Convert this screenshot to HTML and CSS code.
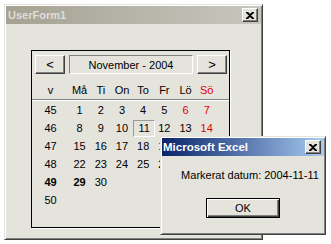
FILE: index.html
```html
<!DOCTYPE html>
<html lang="sv">
<head>
    <meta charset="UTF-8">
    <title>UserForm1</title>
    <link rel="stylesheet" href="styles.css">
</head>
<body>
    <div class="window">
        <div class="caption inactive">
            <span class="caption-text">UserForm1</span>
            <div class="close-btn">
                <svg width="8" height="7" viewBox="0 0 8 7"><path d="M0 0h2l2 2 2-2h2v1L5 3.5 8 6v1H6L4 5 2 7H0V6l3-2.5L0 1z" fill="#000"/></svg>
            </div>
        </div>
        <div class="client">
            <div class="calendar">
                <div class="cal-nav">
                    <div class="btn nav-btn">&lt;</div>
                    <div class="month">November - 2004</div>
                    <div class="btn nav-btn">&gt;</div>
                </div>
                <div class="cal-row cal-head">
                    <span>v</span><span>Må</span><span>Ti</span><span>On</span><span>To</span><span>Fr</span><span>Lö</span><span class="red">Sö</span>
                </div>
                <div class="cal-body">
                    <div class="cal-row">
                        <span>45</span><span>1</span><span>2</span><span>3</span><span>4</span><span>5</span><span class="red">6</span><span class="red">7</span>
                    </div>
                    <div class="cal-row">
                        <span>46</span><span>8</span><span>9</span><span>10</span><span class="today">11</span><span>12</span><span>13</span><span class="red">14</span>
                    </div>
                    <!-- rest of these two rows sits under the message box -->
                    <div class="cal-row">
                        <span>47</span><span>15</span><span>16</span><span>17</span><span>18</span><span>19</span>
                    </div>
                    <div class="cal-row">
                        <span>48</span><span>22</span><span>23</span><span>24</span><span>25</span><span>26</span>
                    </div>
                    <div class="cal-row">
                        <span class="bold">49</span><span class="bold">29</span><span>30</span>
                    </div>
                    <div class="cal-row">
                        <span>50</span>
                    </div>
                </div>
            </div>
        </div>
    </div>

    <div class="dialog">
        <div class="caption active">
            <span class="caption-text">Microsoft Excel</span>
            <div class="close-btn">
                <svg width="8" height="7" viewBox="0 0 8 7"><path d="M0 0h2l2 2 2-2h2v1L5 3.5 8 6v1H6L4 5 2 7H0V6l3-2.5L0 1z" fill="#000"/></svg>
            </div>
        </div>
        <div class="message">Markerat datum: 2004-11-11</div>
        <div class="ok-wrap">
            <div class="btn ok-btn">OK</div>
        </div>
    </div>
</body>
</html>
```

FILE: styles.css
```css
:root {
    --face: #e4e3dc;
    --shadow: #808080;
    --dark: #404040;
    --light: #fff;
}

body {
    margin: 0;
    background: #fff;
    font-family: 'Liberation Sans', Arial, sans-serif;
    font-size: 11px;
    color: #000;
    position: relative;
}

/* window frames */
.window,
.dialog {
    box-sizing: border-box;
    background: var(--face);
    border: 1px solid;
    border-color: var(--face) var(--dark) var(--dark) var(--face);
    box-shadow: inset 1px 1px 0 var(--light), inset -1px -1px 0 var(--shadow);
    padding: 1px;
}

.window {
    margin: 4px 0 0 4px;
    width: 259px;
    height: 236px;
}

.caption {
    height: 18px;
    display: flex;
    align-items: center;
    justify-content: space-between;
    padding: 0 3px 0 2px;
    font-weight: bold;
}

.caption.inactive {
    background: linear-gradient(to right, #a5a293, #c8c6be);
    color: #deddd6;
}

.caption.active {
    background: linear-gradient(to right, #0a246a, #a6caf0);
    color: #fff;
    font-size: 11.5px;
    padding-left: 1px;
}

.close-btn {
    box-sizing: border-box;
    width: 16px;
    height: 14px;
    background: var(--face);
    border: 1px solid;
    border-color: var(--light) var(--dark) var(--dark) var(--light);
    box-shadow: inset -1px -1px 0 var(--shadow);
    display: flex;
    align-items: center;
    justify-content: center;
}

.client {
    padding: 26px 0 0 25px;
}

/* calendar control */
.calendar {
    box-sizing: border-box;
    width: 199px;
    height: 178px;
    border: 1px solid #000;
    box-shadow: 1px 1px 0 var(--light);
}

.cal-nav {
    display: flex;
    gap: 4px;
    padding: 4px 2px 0 3px;
}

.btn {
    box-sizing: border-box;
    background: var(--face);
    border: 1px solid;
    border-color: var(--light) var(--dark) var(--dark) var(--light);
    box-shadow: inset -1px -1px 0 var(--shadow);
    display: flex;
    align-items: center;
    justify-content: center;
}

.nav-btn {
    width: 30px;
    height: 19px;
    font-size: 13px;
}

.month {
    box-sizing: border-box;
    flex: 1;
    height: 19px;
    border: 1px solid;
    border-color: var(--shadow) var(--light) var(--light) var(--shadow);
    display: flex;
    align-items: center;
    justify-content: center;
    font-size: 11px;
}

.cal-row {
    display: grid;
    grid-template-columns: 37px repeat(7, 21.2px);
    height: 18px;
    align-items: center;
}

.cal-row span {
    text-align: center;
}

.cal-head {
    margin-top: 7px;
    border-bottom: 1px solid var(--shadow);
    box-shadow: 0 1px 0 var(--light);
}

.cal-body {
    padding-top: 1px;
}

.cal-row .today {
    box-sizing: border-box;
    justify-self: center;
    width: 22px;
    height: 17px;
    line-height: 15px;
    border: 1px solid;
    border-color: #9a9a9a var(--light) var(--light) #9a9a9a;
    margin-left: 2px;
}

.red {
    color: #e00000;
}

.bold {
    font-weight: bold;
}

/* message box */
.dialog {
    position: absolute;
    left: 160px;
    top: 136px;
    width: 166px;
    height: 99px;
}

.message {
    margin-top: 13px;
    line-height: 13px;
    padding-left: 14px;
    text-align: center;
}

.ok-wrap {
    display: flex;
    justify-content: center;
    margin-top: 16px;
}

.ok-btn {
    width: 74px;
    height: 20px;
    border: 1px solid #000;
    box-shadow: inset 1px 1px 0 var(--light), inset -1px -1px 0 var(--dark), inset -2px -2px 0 var(--shadow);
}
```
